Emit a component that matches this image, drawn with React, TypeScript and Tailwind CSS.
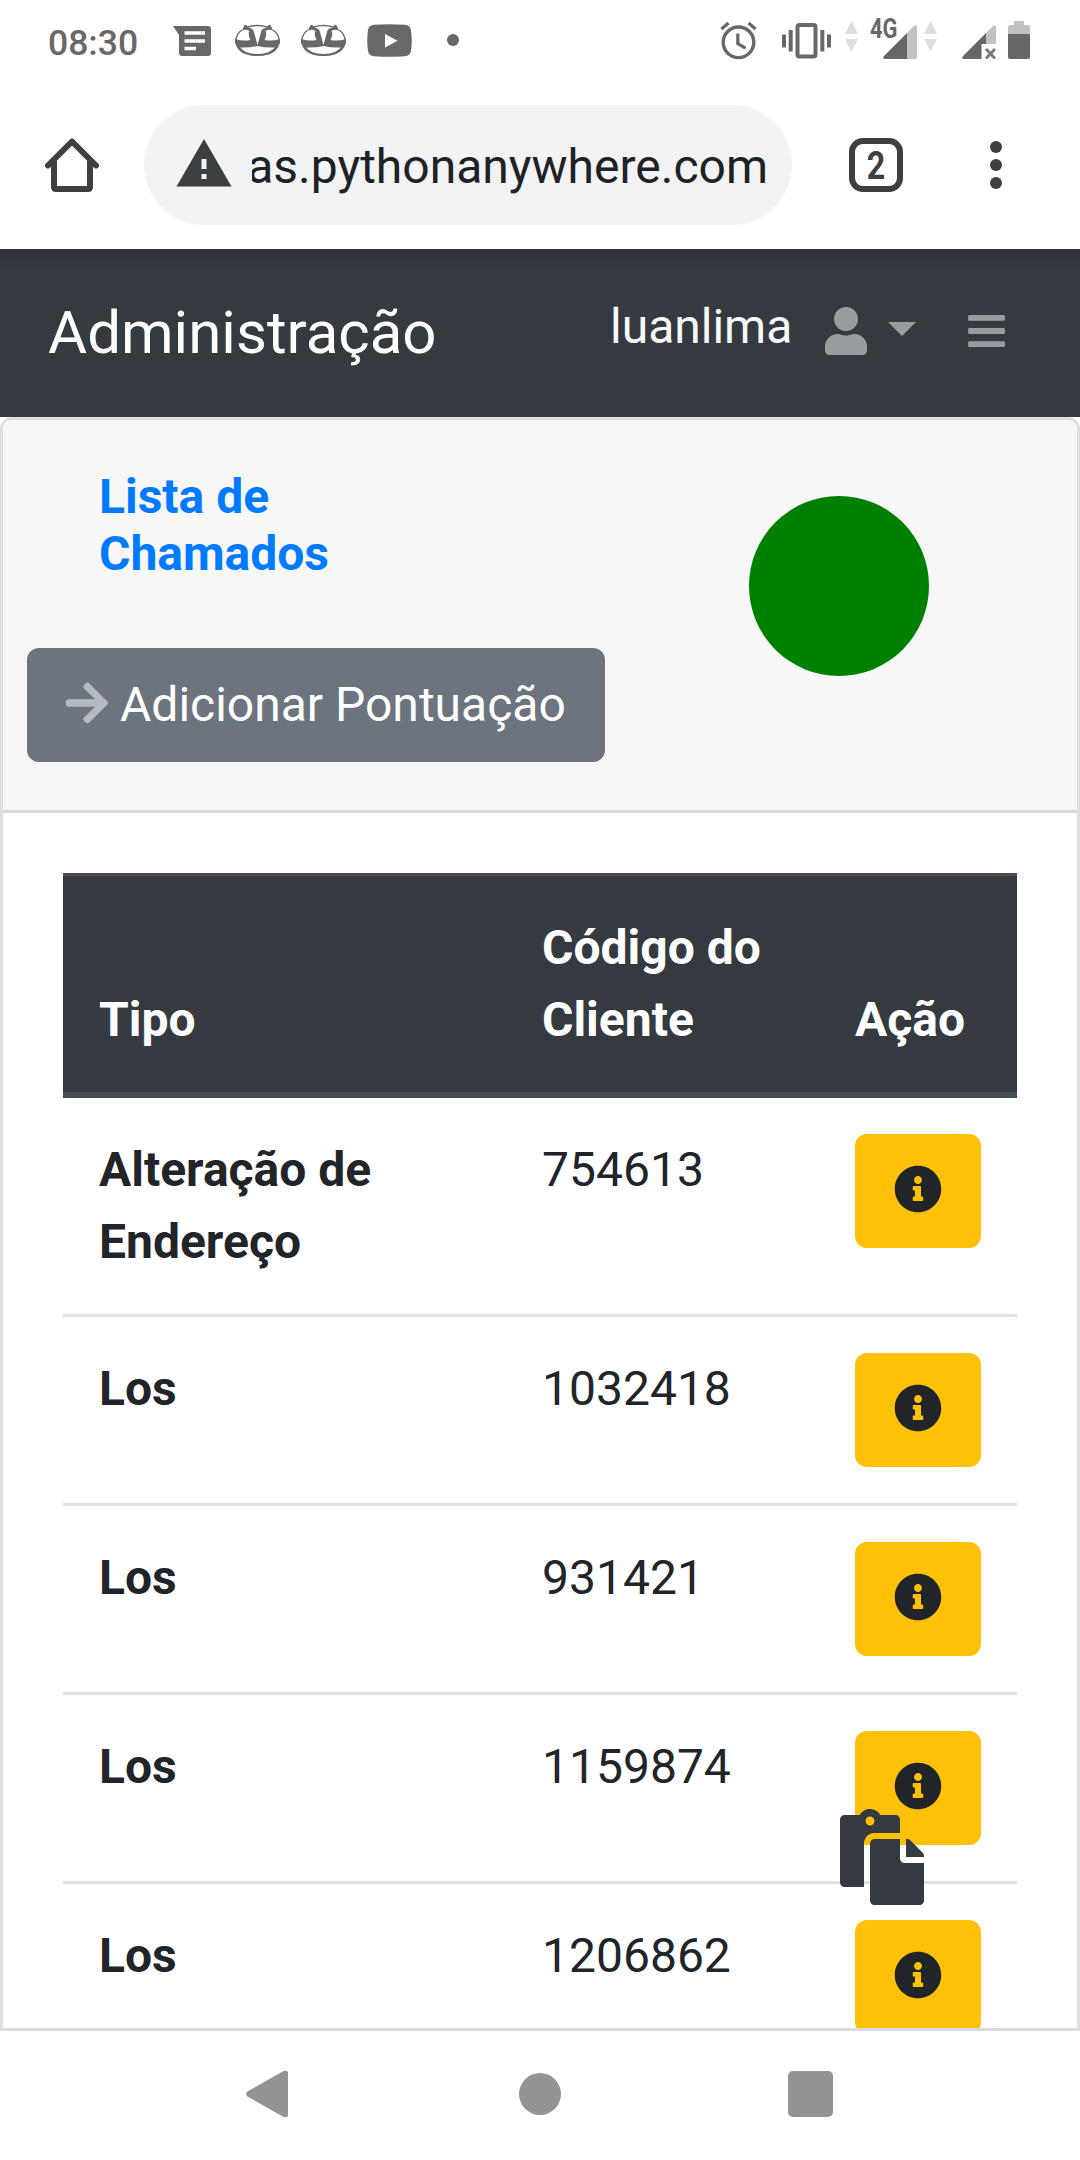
import React from 'react';
import { FaArrowRight, FaBars, FaInfoCircle, FaPaste, FaUser } from 'react-icons/fa';

interface Chamado {
  tipo: string;
  codigo: string;
}

const chamados: Chamado[] = [
  { tipo: 'Alteração de Endereço', codigo: '754613' },
  { tipo: 'Los', codigo: '1032418' },
  { tipo: 'Los', codigo: '931421' },
  { tipo: 'Los', codigo: '1159874' },
  { tipo: 'Los', codigo: '1206862' },
];

const PandaIcon: React.FC<{ className?: string }> = ({ className }) => (
  <svg className={className} width="45" height="33" viewBox="0 0 45 33" fill="#686868">
    <path d="M0 15Q8 17.500 15.500 16Q12.500 10 14.500 7Q11 5 7 6.500L9 2Q10.500 0 12 1.500L14 4Q18 4 19 8L22.500 21L26 8Q27 4 31 4L33 1.500Q34.500 0 36 2L38 6.500Q34 5 30.500 7Q32.500 10 29.500 16Q37 17.500 45 15V19Q43 22 41 23.500Q30 24 22.500 22Q15 24 4 23.500Q2 22 0 19Z" />
    <path d="M13 3Q22.500 0 32 3M7 6Q1 10 .800 17Q2 31 22.500 31.200Q43 31 44.200 17Q44 10 38 6" fill="none" stroke="#686868" strokeWidth="1.400" />
    <path d="M3 22Q8 31 22.500 31Q37 31 42 22" fill="none" stroke="#686868" strokeWidth="2" />
  </svg>
);

const DataArrows: React.FC<{ className?: string }> = ({ className }) => (
  <svg className={className} width="13" height="32" viewBox="0 0 13 32" fill="#dedede">
    <path d="M6.500 0L13 13H0ZM0 18H13L6.500 31Z" />
  </svg>
);

const StatusBar: React.FC = () => (
  <div className="flex h-[81px] items-start pl-12">
    <span className="mt-[22px] w-[125px] text-[35.5px] leading-[42px] font-medium text-[#686868]">08:30</span>

    <svg className="mt-[26px]" width="38" height="30" viewBox="0 0 38 30">
      <path d="M0 0H35Q38 0 38 3V27Q38 30 35 30H9Q6 30 6 27V9Z" fill="#686868" />
      <path d="M11.500 7H32M11.500 15H32M11.500 22.500H23" stroke="#fff" strokeWidth="3.600" />
    </svg>
    <PandaIcon className="mt-[24px] ml-6" />
    <PandaIcon className="mt-[24px] ml-[21px]" />
    <svg className="mt-[24px] ml-[21px]" width="45" height="33" viewBox="0 0 45 33">
      <path d="M7 .800Q22 -.500 38 .800Q43 1 44 6Q45.500 17 44 27Q43 32 38 32.200Q22 33.500 7 32.200Q2 32 1 27Q-.500 17 1 6Q2 1 7 .800Z" fill="#686868" />
      <path d="M18 10V23.500L30.500 16.800Z" fill="#fff" />
    </svg>
    <span className="mt-[34px] ml-[35px] h-3 w-3 rounded-full bg-[#686868]" />

    <svg className="mt-[21px] ml-[261px]" width="37" height="39" viewBox="0 0 37 39" fill="none" stroke="#686868" strokeWidth="3.400">
      <circle cx="18.500" cy="21.300" r="15.300" />
      <path d="M17.800 12.500V22.500L25.500 27.200M1.500 8L8.500 2M35.500 8L28.500 2" strokeWidth="3.200" />
    </svg>
    <svg className="mt-[22px] ml-[25px]" width="49" height="38" viewBox="0 0 49 38" fill="none" stroke="#686868" strokeWidth="4">
      <rect x="15.500" y="3" width="18" height="31.500" rx="2" />
      <path d="M2 12.500V25.500M8.700 8V29.500M47 12.500V25.500M40.300 8V29.500" />
    </svg>
    <DataArrows className="mt-[21px] ml-[14px]" />
    <span className="mt-[15px] ml-3 w-[13px] text-[28px] leading-[28px] font-bold text-[#686868]">
      <span className="inline-block origin-left scale-x-[0.78]">4G</span>
    </span>
    <svg className="mt-[25px]" width="34" height="34" viewBox="0 0 34 34">
      <path d="M34 2V32Q34 34 32 34H24V8L31 1Q34 -1 34 2Z" fill="#c2c2c2" />
      <path d="M24 8V34H2Q-1 34 1 31Z" fill="#666" />
    </svg>
    <DataArrows className="mt-[21px] ml-[7px]" />
    <svg className="mt-[25px] ml-[25px]" width="34" height="34" viewBox="0 0 34 34">
      <path d="M34 2V19H24V8L31 1Q34 -1 34 2Z" fill="#c2c2c2" />
      <path d="M24 8V19H19.500V34H2Q-1 34 1 31Z" fill="#666" />
      <path d="M24 24L33 33.500M33 24L24 33.500" stroke="#787878" strokeWidth="2.800" />
    </svg>
    <svg className="mt-[21px] ml-3" width="22" height="38" viewBox="0 0 22 38">
      <path d="M6 0H16V4H20Q22 4 22 6V13H0V6Q0 4 2 4H6Z" fill="#c2c2c2" />
      <path d="M0 13H22V36Q22 38 20 38H2Q0 38 0 36Z" fill="#666" />
    </svg>
  </div>
);

const BrowserBar: React.FC = () => (
  <div className="flex h-[168px] items-center pl-[45px]">
    <svg width="54" height="54" viewBox="0 0 54 54" fill="none" stroke="#3c4043" strokeWidth="6">
      <path d="M3 27.500L27 3.500L51 27.500" strokeLinecap="round" strokeLinejoin="round" />
      <path d="M9 22V49Q9 51 11 51H43Q45 51 45 49V22" />
    </svg>
    <div className="ml-[45px] flex h-[120px] w-[648px] items-center rounded-full bg-[#f1f3f4] pl-[30px]">
      <svg className="mb-[3px]" width="60" height="60" viewBox="0 0 24 24" fill="#3c4043">
        <path d="M1 21h22L12 2 1 21zm12-3h-2v-2h2v2zm0-4h-2v-4h2v4z" />
      </svg>
      <div className="mt-[3px] ml-[18px] flex w-[516px] justify-end overflow-hidden text-[48px] leading-[60px] whitespace-nowrap text-[#202124]">
        as.pythonanywhere.com
      </div>
    </div>
    <div className="ml-[57px] flex h-[54px] w-[54px] items-center justify-center rounded-[14px] border-[6px] border-[#3c4043] text-[38px] leading-[42px] font-bold text-[#3c4043]">
      <span className="mt-px scale-x-85">2</span>
    </div>
    <div className="ml-[87px] flex flex-col gap-[6px]">
      <span className="h-3 w-3 rounded-full bg-[#3c4043]" />
      <span className="h-3 w-3 rounded-full bg-[#3c4043]" />
      <span className="h-3 w-3 rounded-full bg-[#3c4043]" />
    </div>
  </div>
);

const Navbar: React.FC = () => (
  <nav className="flex h-[168px] items-start bg-[#343a40] bg-linear-to-b from-[#2f343a] to-[#343a40] to-[24px] pl-12">
    <a className="mt-[39px] text-[60px] leading-[90px] text-white">Administração</a>
    <span className="mt-[42px] ml-auto w-[215px] text-[48px] leading-[72px] text-[#f8f9fa]">luanlima</span>
    <FaUser className="mt-[58px] h-12 w-[42px] text-[#9a9da0]" />
    <span className="mt-[73px] ml-[21px] border-x-[14.4px] border-t-[14.4px] border-x-transparent border-t-[#9a9da0]" />
    <FaBars className="mt-[61px] mr-[75px] ml-[52px] h-[42px] w-[37px] text-[#9a9da0]" />
  </nav>
);

const ChamadosTable: React.FC = () => (
  <table className="w-[954px] table-fixed border-separate border-spacing-0 text-left text-[48px] leading-[72px] text-[#212529]">
    <thead className="bg-[#343a40] text-white">
      <tr className="align-bottom">
        <th className="w-[443px] border-t-3 border-b-6 border-[#454d55] p-9 font-bold">Tipo</th>
        <th className="w-[313px] border-t-3 border-b-6 border-[#454d55] p-9 font-bold">Código do Cliente</th>
        <th className="w-[198px] border-t-3 border-b-6 border-[#454d55] p-9 font-bold">Ação</th>
      </tr>
    </thead>
    <tbody className="[&>tr+tr>*]:border-t-3 [&>tr+tr>*]:border-[#dee2e6]">
      {chamados.map((chamado, index) => (
        <tr key={index} className="align-top">
          <th className="p-9 font-bold">
            <div className="w-[300px]">{chamado.tipo}</div>
          </th>
          <td className="p-9">{chamado.codigo}</td>
          <td className="p-9">
            <button className="flex h-[114px] w-[126px] items-start justify-center rounded-xl bg-[#ffc107] pt-[31px]">
              <FaInfoCircle className="h-12 w-12" />
            </button>
          </td>
        </tr>
      ))}
    </tbody>
  </table>
);

const NavigationBar: React.FC = () => (
  <div className="flex h-[132px] items-start border-t-3 border-[#dadadf] bg-white pt-[39px]">
    <svg className="ml-[246px]" width="42" height="48" viewBox="0 0 43 48" fill="#949494">
      <path d="M38.500 .500Q43 -1 43 3V45Q43 49 38.500 47.500L1.500 26.500Q-1.300 24 1.500 21.500Z" />
    </svg>
    <span className="mt-[3px] ml-[231px] h-[42px] w-[42px] rounded-full bg-[#949494]" />
    <span className="mt-[1px] ml-[226.5px] h-[46px] w-[45px] rounded-[5px] bg-[#949494]" />
  </div>
);

const App: React.FC = () => {
  return (
    <div className="relative flex h-[2160px] w-[1080px] flex-col overflow-hidden bg-white font-[Roboto,sans-serif]">
      <StatusBar />
      <BrowserBar />
      <Navbar />

      <main className="min-h-0 flex-1 overflow-hidden">
        <div className="h-[2000px] rounded-xl border-3 border-[#dfdfdf]">
          <div className="flex h-[393px] items-start rounded-t-[9px] border-b-3 border-[#d9d9d9] bg-[#f7f7f7] pl-6">
            <div className="w-[579px]">
              <h6 className="mt-[48px] ml-[72px] w-[300px] text-[48px] leading-[57px] font-bold text-[#007bff]">
                Lista de Chamados
              </h6>
              <button className="mt-[66px] flex h-[114px] w-[578px] items-center rounded-xl bg-[#6c757d] pl-[39px] text-[48px] leading-[72px] whitespace-nowrap text-white">
                <FaArrowRight className="mr-3 mb-1 h-12 w-[42px] text-[#b5babe]" />
                Adicionar Pontuação
              </button>
            </div>
            <div className="mt-[76px] ml-[143px] h-[180px] w-[180px] rounded-full bg-[#008000]" />
          </div>
          <div className="px-[60px] pt-[60px]">
            <ChamadosTable />
          </div>
        </div>
      </main>

      <NavigationBar />

      {/* floating shortcut, sits above the table */}
      <FaPaste className="absolute top-[1809px] left-[840px] h-24 w-[84px] text-[#343a40]" />
    </div>
  );
};

export default App;
